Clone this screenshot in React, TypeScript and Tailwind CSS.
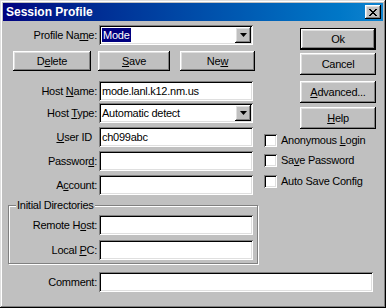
import type { ReactNode } from 'react';

const sunken =
  'bg-white shadow-[inset_1px_1px_0_#808080,inset_-1px_-1px_0_#ffffff,inset_2px_2px_0_#000000,inset_-2px_-2px_0_#dfdfdf]';
const raised =
  'bg-[#c0c0c0] shadow-[inset_-1px_-1px_0_#000000,inset_1px_1px_0_#ffffff,inset_-2px_-2px_0_#808080,inset_2px_2px_0_#dfdfdf]';

function Row({
  label,
  labelW = 'w-[96px]',
  className = '',
  children,
}: {
  label: ReactNode;
  labelW?: string;
  className?: string;
  children: ReactNode;
}) {
  return (
    <div className={`flex h-[20px] ${className}`}>
      <div className={`${labelW} shrink-0 pr-[2px] text-right leading-[20px] whitespace-nowrap`}>{label}</div>
      {children}
    </div>
  );
}

function Field({ text = '', w = 'w-[154px]' }: { text?: string; w?: string }) {
  return <div className={`${sunken} ${w} h-[20px] pl-[3px] leading-[20px] whitespace-nowrap overflow-hidden`}>{text}</div>;
}

function Arrow() {
  return (
    <div className={`${raised} w-[16px] h-[16px] mr-[2px] flex items-center justify-center`}>
      <svg width="7" height="4" viewBox="0 0 7 4">
        <polygon points="0,0 7,0 3.5,4" fill="#000" />
      </svg>
    </div>
  );
}

function Combo({ children }: { children: ReactNode }) {
  return (
    <div className={`${sunken} w-[154px] h-[20px] flex items-center`}>
      <div className="flex-1 pl-[3px] leading-[20px] whitespace-nowrap overflow-hidden">{children}</div>
      <Arrow />
    </div>
  );
}

function Btn({ children, className = '' }: { children: ReactNode; className?: string }) {
  return (
    <div className={`${raised} h-[20px] flex items-center justify-center leading-none ${className}`}>{children}</div>
  );
}

function Check({ label, className = '' }: { label: ReactNode; className?: string }) {
  return (
    <div className={`flex items-center h-[13px] ${className}`}>
      <div className={`${sunken} w-[13px] h-[13px]`} />
      <span className="ml-[4px] whitespace-nowrap">{label}</span>
    </div>
  );
}

function CloseGlyph() {
  const px = [
    [0, 0], [1, 0], [6, 0], [7, 0],
    [1, 1], [2, 1], [5, 1], [6, 1],
    [2, 2], [3, 2], [4, 2], [5, 2],
    [3, 3], [4, 3],
    [2, 4], [3, 4], [4, 4], [5, 4],
    [1, 5], [2, 5], [5, 5], [6, 5],
    [0, 6], [1, 6], [6, 6], [7, 6],
  ];
  return (
    <svg width="8" height="7" viewBox="0 0 8 7" shapeRendering="crispEdges">
      {px.map(([x, y]) => (
        <rect key={`${x}-${y}`} x={x} y={y} width="1" height="1" fill="#000" />
      ))}
    </svg>
  );
}

export default function App() {
  return (
    <div className="w-[386px] h-[308px] bg-[#c0c0c0] p-[3px] flex flex-col text-[11px] tracking-[-0.25px] text-black font-['Liberation_Sans',Arial,sans-serif] shadow-[inset_-1px_-1px_0_#000000,inset_1px_1px_0_#dfdfdf,inset_-2px_-2px_0_#808080,inset_2px_2px_0_#ffffff]">
      {/* title bar */}
      <div className="h-[18px] shrink-0 flex items-center bg-gradient-to-r from-[#000080] to-[#1084d0]">
        <span className="pl-[3px] text-white font-bold text-[12px] tracking-normal">Session Profile</span>
        <div className={`${raised} ml-auto mr-[2px] w-[16px] h-[14px] flex items-center justify-center`}>
          <CloseGlyph />
        </div>
      </div>

      <div className="flex">
        {/* left column */}
        <div className="w-[261px] shrink-0 flex flex-col">
          <Row className="mt-[4px]" label={<>Profile Na<u>m</u>e:</>}>
            <Combo>
              <span className="bg-[#000080] text-white px-[1px] py-[1px]">Mode</span>
            </Combo>
          </Row>

          <div className="flex h-[20px] mt-[6px]">
            <Btn className="ml-[10px] w-[78px]">
              D<u>e</u>lete
            </Btn>
            <Btn className="ml-[7px] w-[72px]">
              <u>S</u>ave
            </Btn>
            <Btn className="ml-[10px] w-[75px]">
              Ne<u>w</u>
            </Btn>
          </div>

          <Row className="mt-[10px]" label={<>Host <u>N</u>ame:</>}>
            <Field text="mode.lanl.k12.nm.us" />
          </Row>
          <Row className="mt-[2px]" label={<>Host <u>T</u>ype:</>}>
            <Combo>Automatic detect</Combo>
          </Row>
          <Row className="mt-[4px]" label={<><span className="pr-[5px]"><u>U</u>ser ID</span></>}>
            <Field text="ch099abc" />
          </Row>
          <Row className="mt-[4px]" label={<>Passwor<u>d</u>:</>}>
            <Field />
          </Row>
          <Row className="mt-[4px]" label={<>A<u>c</u>count:</>}>
            <Field />
          </Row>

          {/* group box */}
          <div className="mt-[10px] ml-[5px] w-[250px] border border-[#808080] pb-[3px] shadow-[inset_1px_1px_0_#ffffff,1px_1px_0_#ffffff]">
            <div className="w-fit -mt-[7px] ml-[7px] px-[1px] h-[13px] leading-[13px] bg-[#c0c0c0]">Initial Directories</div>
            <Row className="mt-[3px]" labelW="w-[90px]" label={<>Remote H<u>o</u>st:</>}>
              <Field />
            </Row>
            <Row className="mt-[5px]" labelW="w-[90px]" label={<>Local <u>P</u>C:</>}>
              <Field />
            </Row>
          </div>
        </div>

        {/* right column */}
        <div className="flex flex-col">
          <div
            className={`${raised} border border-black ml-[36px] mt-[7px] w-[76px] h-[22px] flex items-center justify-center`}
          >
            Ok
          </div>
          <Btn className="ml-[36px] mt-[3px] w-[76px] h-[22px]">Cancel</Btn>
          <Btn className="ml-[36px] mt-[6px] w-[76px] h-[22px]">
            <u>A</u>dvanced...
          </Btn>
          <Btn className="ml-[36px] mt-[4px] w-[76px] h-[22px]">
            <u>H</u>elp
          </Btn>
          <Check className="mt-[5px]" label={<>Anonymous <u>L</u>ogin</>} />
          <Check className="mt-[7px]" label={<>Sa<u>v</u>e Password</>} />
          <Check className="mt-[8px]" label="Auto Save Config" />
        </div>
      </div>

      <Row className="mt-[8px]" label="Comment:">
        <Field w="w-[274px]" />
      </Row>
    </div>
  );
}
